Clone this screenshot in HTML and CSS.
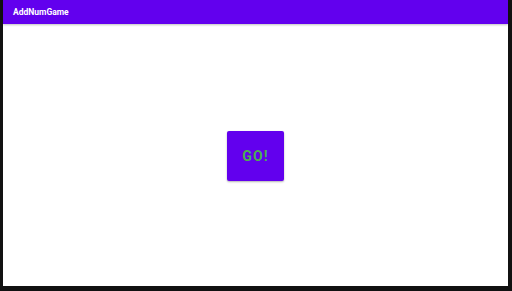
FILE: index.html
```html
<!DOCTYPE html>
<html>
<head>
<meta charset="utf-8">
<link rel="stylesheet" href="styles.css">
</head>
<body>
<div class="screen">
  <header class="appbar">
    <span class="title">AddNumGame</span>
  </header>
  <main class="content">
    <button class="go">GO!</button>
  </main>
</div>
</body>
</html>
```

FILE: styles.css
```css
html, body {
  margin: 0;
  padding: 0;
}
body {
  background: #111111;
  width: 512px;
  height: 291px;
  overflow: hidden;
  font-family: Roboto, "Noto Sans", sans-serif;
}
.screen {
  margin-left: 3px;
  width: 505px;
  height: 286px;
  background: #ffffff;
  display: flex;
  flex-direction: column;
}
.appbar {
  height: 24px;
  flex: none;
  background: #6200ee;
  display: flex;
  align-items: center;
  padding-left: 10px;
  box-shadow: 0 1px 2px rgba(0, 0, 0, 0.25);
  position: relative;
  z-index: 1;
}
.title {
  color: #ffffff;
  font-size: 8.5px;
  font-weight: 700;
}
.content {
  flex: 1;
  display: flex;
  align-items: center;
  justify-content: center;
}
.go {
  width: 57px;
  height: 50px;
  border: none;
  border-radius: 2px;
  background: #6200ee;
  color: #4caf50;
  font-family: Roboto, sans-serif;
  font-size: 14px;
  font-weight: 700;
  letter-spacing: 1.1px;
  padding: 0;
  box-shadow: 0 1px 2px rgba(0, 0, 0, 0.3);
  margin-top: 2px;
}
```
